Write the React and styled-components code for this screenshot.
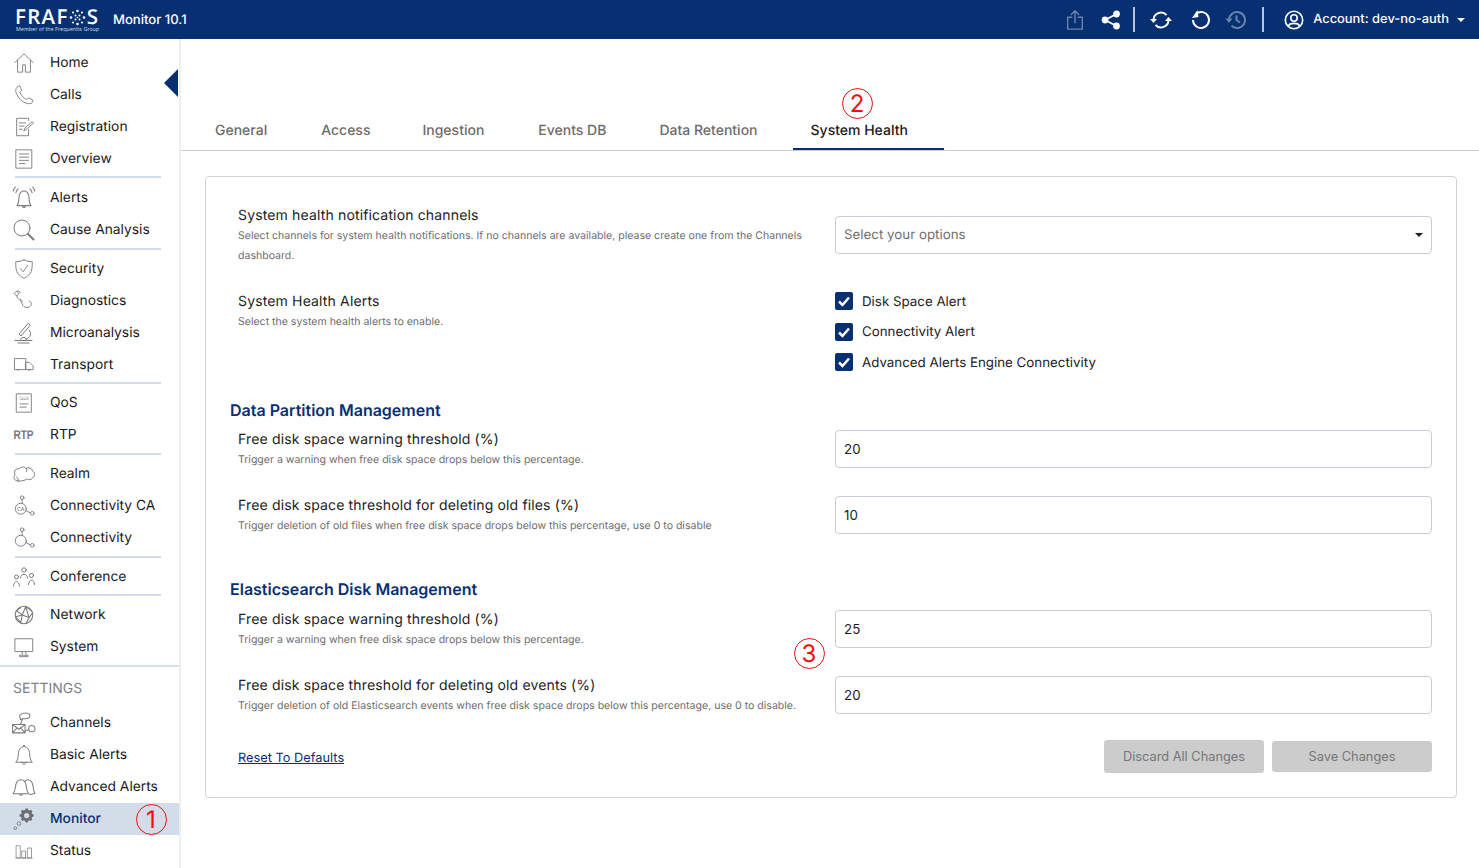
import styled, { createGlobalStyle } from "styled-components";

const NAVY = "#073072";
const ICON = "#7c7c7c";

const GlobalStyle = createGlobalStyle`
  html, body {
    margin: 0;
    padding: 0;
    background: #fff;
    font-family: Inter, "Liberation Sans", sans-serif;
    color: #1b1b1b;
    overflow: hidden;
    text-rendering: geometricPrecision;
  }
  * { box-sizing: border-box; }
`;

const Page = styled.div`
  width: 1479px;
  height: 868px;
  display: flex;
  flex-direction: column;
  position: relative;
  overflow: hidden;
`;

const Header = styled.header`
  height: 39px;
  flex: none;
  background: ${NAVY};
  color: #fff;
  display: flex;
  align-items: center;
  padding-left: 15px;
`;

const Logo = styled.div`
  width: 98px;
  display: flex;
  flex-direction: column;
`;

const LogoWord = styled.div`
  display: flex;
  align-items: center;
  height: 18px;
  font-family: "Open Sans", sans-serif;
  font-size: 20.5px;
  font-weight: 600;
  letter-spacing: 1.3px;
  line-height: 18px;
  margin-top: 3px;
`;

const LogoSub = styled.div`
  font-size: 5.4px;
  line-height: 8px;
  color: #c4d0e2;
  white-space: nowrap;
  padding-left: 1px;
`;

const AppName = styled.div`
  font-size: 13.1px;
  font-weight: 500;
`;

const HeaderRight = styled.div`
  margin-left: auto;
  display: flex;
  align-items: center;
  height: 100%;
`;

const HeaderButton = styled.div`
  display: flex;
  align-items: center;
  justify-content: center;
  width: ${(p) => p.$w || 36}px;
  opacity: ${(p) => (p.$dim ? 0.4 : 1)};
`;

const HeaderDivider = styled.div`
  width: 2px;
  height: 25px;
  background: #b9c4d6;
  margin: 0 ${(p) => p.$r || 12}px 0 ${(p) => p.$l || 12}px;
`;

const Account = styled.div`
  font-size: 12.9px;
  font-weight: 500;
  margin-left: 9px;
`;

const Caret = styled.span`
  width: 0;
  height: 0;
  border-left: 4.5px solid transparent;
  border-right: 4.5px solid transparent;
  border-top: 4.5px solid ${(p) => p.$color || "#fff"};
  margin-left: ${(p) => p.$ml || 0}px;
  margin-right: ${(p) => p.$mr || 0}px;
`;

const Body = styled.div`
  flex: 1;
  display: flex;
  min-height: 0;
`;

const Sidebar = styled.aside`
  width: 181px;
  flex: none;
  padding-top: 7px;
  border-right: 2px solid #eeeeee;
  position: relative;
`;

const Collapse = styled.span`
  display: block;
  position: absolute;
  top: 30px;
  right: 1px;
  width: 0;
  height: 0;
  border-top: 14px solid transparent;
  border-bottom: 14px solid transparent;
  border-right: 14px solid ${NAVY};
`;

const NavGroup = styled.div`
  &:first-of-type {
    padding-bottom: 1px;
  }
`;

const NavItem = styled.div`
  height: 32px;
  padding-top: 1px;
  display: flex;
  align-items: center;
  font-size: 13.8px;
  color: ${(p) => (p.$active ? NAVY : "#1a1a1a")};
  background: ${(p) => (p.$active ? "#d3dce9" : "transparent")};
  font-weight: ${(p) => (p.$active ? 500 : 400)};
`;

const IconSlot = styled.span`
  width: 50px;
  flex: none;
  display: flex;
  justify-content: center;
  padding-right: 3px;
`;

const RtpMark = styled.span`
  font-family: "Liberation Sans", sans-serif;
  font-size: 12.5px;
  font-weight: 700;
  color: #777;
  display: inline-block;
  transform: scaleX(0.8);
`;

const NavDivider = styled.div`
  height: 2px;
  width: 146px;
  margin: 2px 0 2.67px 15px;
  background: #d3dce9;
`;

const SectionRule = styled.div`
  height: 2px;
  margin-top: 2px;
  background: #d8e0ea;
`;

const SettingsTitle = styled.div`
  font-size: 14px;
  color: #808080;
  padding: 12px 0 0 13px;
  height: 40px;
  line-height: 20px;
`;

const Main = styled.main`
  flex: 1;
  min-width: 0;
  display: flex;
  flex-direction: column;
`;

const Tabs = styled.nav`
  height: 112px;
  flex: none;
  display: flex;
  align-items: flex-end;
  padding-left: 16px;
  border-bottom: 1px solid #cfcfcf;
`;

const Tab = styled.div`
  height: 31px;
  padding: 2px ${(p) => (p.$active ? 36 : 18)}px 0 18px;
  margin-right: ${(p) => p.$gap}px;
  font-size: 14px;
  font-weight: 500;
  line-height: 19px;
  color: ${(p) => (p.$active ? "#1b1b1b" : "#6c6c6c")};
  border-bottom: 2px solid ${(p) => (p.$active ? NAVY : "transparent")};
`;

const Card = styled.section`
  margin: 25px 22px 0 24px;
  height: 622px;
  border: 1px solid #cfd2d6;
  border-radius: 4px;
  padding: 28px 24px 0;
`;

const Row = styled.div`
  display: grid;
  grid-template-columns: 570px 597px;
  justify-content: space-between;
  align-items: ${(p) => (p.$top ? "start" : "center")};
  padding-left: 8px;
  margin-bottom: 26px;
`;

const LabelCol = styled.div`
  width: 570px;
`;

const Label = styled.div`
  font-size: 14px;
  letter-spacing: 0.15px;
  line-height: 20px;
  color: #222;
  margin-top: 1px;
`;

const Hint = styled.div`
  font-size: 10.55px;
  line-height: 20px;
  color: #6d6d6d;
  margin-bottom: -1px;
`;

const SectionTitle = styled.h2`
  margin: ${(p) => (p.$spaced ? 42 : 0)}px 0 ${(p) => p.$below}px;
  font-size: 16px;
  line-height: 24px;
  font-weight: 600;
  color: ${NAVY};
`;

const Select = styled.div`
  height: 38px;
  border: 1px solid #c6ccd6;
  border-radius: 4px;
  display: flex;
  align-items: center;
  justify-content: space-between;
  padding: 0 8px;
  font-size: 13.33px;
  color: #6f6f6f;
`;

const Input = styled.input`
  height: 38px;
  width: 100%;
  border: 1px solid #c6ccd6;
  border-radius: 4px;
  padding: 0 8px;
  font: inherit;
  font-size: 13.33px;
  color: #1b1b1b;
  outline: none;
`;

const Checks = styled.div`
  display: flex;
  flex-direction: column;
  gap: 10.5px;
`;

const CheckRow = styled.label`
  display: flex;
  align-items: center;
  height: 20px;
  font-size: 13.33px;
  color: #222;
  gap: 9px;
`;

const CheckText = styled.span`
  padding-top: 1px;
`;

const CheckBox = styled.span`
  width: 18px;
  height: 18px;
  border-radius: 2px;
  background: ${NAVY};
  display: flex;
  align-items: center;
  justify-content: center;
`;

const Footer = styled.div`
  display: flex;
  align-items: center;
  justify-content: space-between;
  padding-left: 8px;
  height: 33px;
  margin-top: -1px;
`;

const ResetLink = styled.a`
  font-size: 12.8px;
  color: ${NAVY};
  text-decoration: underline;
  margin-top: 4px;
`;

const Buttons = styled.div`
  display: flex;
  align-items: center;
  gap: 8px;
`;

const Button = styled.button`
  width: 160px;
  height: ${(p) => p.$h}px;
  border: none;
  border-radius: 3px;
  background: #cccccc;
  color: #767676;
  font: inherit;
  font-size: 12.8px;
`;

const Marker = styled.div`
  position: absolute;
  left: ${(p) => p.$x - 15.5}px;
  top: ${(p) => p.$y - 15.5}px;
  width: 31px;
  height: 31px;
  border: 1.7px solid #f01010;
  border-radius: 50%;
  color: #f01010;
  display: flex;
  align-items: center;
  justify-content: center;
  font-size: 24px;
  font-weight: 400;
`;

const Svg = ({ size = 22, box = 24, stroke = ICON, sw = 1, children }) => (
  <svg width={size} height={size} viewBox={`0 0 ${box} ${box}`} fill="none" stroke={stroke} strokeWidth={sw} strokeLinecap="round" strokeLinejoin="round">
    {children}
  </svg>
);

const navIcons = {
  home: <Svg><path d="M2 11.500 12 2l10 9.500M5 9v13h5.500v-8h3v8H19V9" /></Svg>,
  calls: <Svg><path d="M6 2.500C3 3.500 2 7 4 11c3 6 8 10.500 14 10.500 2.500 0 4-2 3.500-4l-4.500-2.500-2 2c-3-1-6.500-5-7.500-8l2-2L7.500 2.500z" /></Svg>,
  registration: <Svg><path d="M17 5V2.500H4v19h13v-7M7 7.500h7M7 11h5M7 14.500h3" /><path d="M12 16l1-3 8-7 1.500 1.500-8 7z" /></Svg>,
  overview: <Svg><path d="M3.500 2h17v20h-17zM7 6.500h10M7 10h10M7 13.500h10M7 17h6" /></Svg>,
  alerts: <Svg size={26}><path d="M5.500 19c2-2 1.500-5.500 2-8.500.5-3 2.500-5 4.500-5s4 2 4.500 5c.5 3 0 6.500 2 8.500zM10.500 19c0 2.500 3 2.500 3 0M4.500 7c.3-1.500 1-2.500 2-3.500M19.500 7c-.3-1.500-1-2.500-2-3.500M2 5.500c.5-1.500 1-2.500 2-3.500M22 5.500c-.5-1.500-1-2.500-2-3.500" /></Svg>,
  cause: <Svg size={24}><circle cx="10" cy="10" r="8" /><path d="M16 16l5.500 5.500" strokeWidth="2" /></Svg>,
  security: <Svg><path d="M12 2c3 1.500 5.500 2 9 2 0 8 0 14-9 18C3 18 3 12 3 4c3.500 0 6-.5 9-2z" /><path d="M8 11.500l3 3.500 5-7" /></Svg>,
  diagnostics: <Svg><path d="M4 1.500 6.500 4 4 6.500 1.500 4zM4 6.500c0 3.500 4.500 4 5.500 7 .8 2.500 1.500 5 4.500 5.500 3 .4 6-1 6-4 0-1.500-1-2.500-2.500-3M4 1.500c2-1 4 0 4 1.500M9.500 13.500c1-1.500 0-3-1.500-3.500" /></Svg>,
  micro: <Svg size={24}><path d="M16 2.500 7 13l2 2 9-10.500zM17 9c3 3 2 8-3 9M3 19.500h17M8 19.500l2-3h3l2 3M6 22h11" /></Svg>,
  transport: <Svg><path d="M2 5h12v12H2zM14 9h4l4 4v4h-8zM7 17a2 2 0 0 1-3 0M19 17a2 2 0 0 1-3 0" /></Svg>,
  qos: (
    <Svg>
      <path d="M4 2h16v20H4zM7.500 13h9M7.500 16.500h7" />
      <text x="12" y="9" fontSize="5" textAnchor="middle" fill={ICON} stroke="none">QoS</text>
    </Svg>
  ),
  rtp: <RtpMark>RTP</RtpMark>,
  realm: <Svg size={24}><path d="M6 19c-4 0-5-4-3-6.500C1.500 9 4 6 7 7c2-2.500 5.500-2.500 7-.5 2.500-1.500 6-.5 6.500 2.500 2.500 1 3 5.500 0 7-2 2.500-5 1.500-6 1-2 2-5 2-8 2zM6 19c.5-2 0-3-1.500-4M14 6.500c1 1 1 2 .5 3" /></Svg>,
  connca: <Svg><circle cx="10" cy="3" r="2" /><circle cx="8.500" cy="15" r="6" /><circle cx="21" cy="20" r="2" /><path d="M10 5v4M14 17l5 2.500" /><text x="8.500" y="17" fontSize="6" textAnchor="middle" fill={ICON} stroke="none">CA</text></Svg>,
  conn: <Svg><circle cx="10" cy="3" r="2" /><circle cx="8.500" cy="15" r="6" /><circle cx="21" cy="20" r="2" /><path d="M10 5v4M14 17l5 2.500" /></Svg>,
  conference: (
    <Svg size={24}>
      <circle cx="12" cy="5" r="2.200" /><path d="M8.500 13c0-5 7-5 7 0" />
      <circle cx="4.500" cy="12" r="2" /><path d="M1.500 21c.5-6 5.500-6 6 0" />
      <circle cx="19.500" cy="10.500" r="2" /><path d="M16.500 19.500c.5-6 6-6 6 0" />
    </Svg>
  ),
  network: <Svg size={20} sw={1.300}><circle cx="12" cy="12" r="10.500" /><path d="M3 7l7 5-8 2M10 12l4-10M10 12l-2 9.500M10 12l8 3-3 6M18 15l4-5M14 2l7 5M3 7l5-4M14 2l4 13M2 14l6 7" /></Svg>,
  system: <Svg><path d="M2.500 3h19v14h-19zM10 17v3M14 17v3M7.500 21h9v1.500h-9z" /></Svg>,
  channels: (
    <Svg size={25}>
      <path d="M1.500 13h12v8h-12zM1.500 13l6 4.500 6-4.500M1.500 21l4.500-5M13.500 21 9 16" />
      <path d="M9 3.500c2-2 8-2 9 0 1 2-1 4-4.500 4-.7 0-1.500 0-2.300-.2L9 8.500V6.500C8 6 8 4.500 9 3.500zM9 13l2-5" />
      <circle cx="20" cy="17" r="3" /><path d="M17 18l-3 1" />
    </Svg>
  ),
  basic: <Svg size={24}><path d="M4 19c2.500-2.500 2-6 2.500-9.500C7 6 9.500 3.500 12 3.500S17 6 17.500 9.500C18 13 17.500 16.500 20 19zM10 19c0 3 4 3 4 0M11.500 3.500V2.500h1v1" /></Svg>,
  advanced: <Svg size={25}><path d="M2 18c2-2.500 2-5 2.500-8C5 7 7 4.500 9.500 4.500 12 4.500 14 7 14.500 10c.5 3 .5 5.500 2.500 8zM8 18c0 2 3 2 3 0M13 6.500c.7-1 2-2 3-2 2.500 0 4.500 2.500 5 5.500.4 3 .4 5 2 7.500l-5 1.500" /></Svg>,
  monitor: (
    <svg width="22" height="22" viewBox="0 0 24 24" fill="#6e6e6e" stroke="none">
      <path fillRule="evenodd" d="M13 3h3l.5 2 1.800.8 1.800-1 2 2-1 1.800.8 1.900 2 .5v2.800l-2 .5-.8 1.800 1 1.800-2 2-1.800-1-1.800.8-.5 2h-3l-.5-2-1.800-.8-1.800 1-2-2 1-1.800-.8-1.800-2-.5v-2.800l2-.5.800-1.900-1-1.800 2-2 1.800 1 1.800-.8zm1.500 6a3.500 3.500 0 1 0 0 7 3.500 3.500 0 0 0 0-7z" transform="translate(3 -2) scale(.82)" />
      <circle cx="6.500" cy="17" r="2" fill="none" stroke="#7c7c7c" />
      <circle cx="2.500" cy="22" r="1.500" fill="none" stroke="#7c7c7c" />
    </svg>
  ),
  status: <Svg size={18}><path d="M2 5h5v16H2zM9.500 12H14v9H9.500zM17 8h5v13h-5zM1 21.500h22" /></Svg>,
};

const monitorNav = [
  [["home", "Home"], ["calls", "Calls"], ["registration", "Registration"], ["overview", "Overview"]],
  [["alerts", "Alerts"], ["cause", "Cause Analysis"]],
  [["security", "Security"], ["diagnostics", "Diagnostics"], ["micro", "Microanalysis"], ["transport", "Transport"]],
  [["qos", "QoS"], ["rtp", "RTP"]],
  [["realm", "Realm"], ["connca", "Connectivity CA"], ["conn", "Connectivity"]],
  [["conference", "Conference"]],
  [["network", "Network"], ["system", "System"]],
];

const settingsNav = [
  ["channels", "Channels"],
  ["basic", "Basic Alerts"],
  ["advanced", "Advanced Alerts"],
  ["monitor", "Monitor"],
  ["status", "Status"],
];

const tabs = [
  ["General", 18],
  ["Access", 16],
  ["Ingestion", 18],
  ["Events DB", 17],
  ["Data Retention", 17],
  ["System Health", 0],
];

const LogoMark = () => (
  <svg width="17" height="17" viewBox="0 0 17 17" fill="#fff" style={{ margin: "0 1px 0 0" }}>
    {[[8.500, 2, 1.300], [4, 3.500, 1.100], [13, 3.500, 1.100], [2, 8.500, 1.300], [15, 8.500, 1.300], [4, 13.500, 1.100], [13, 13.500, 1.100], [8.500, 15, 1.300], [6.500, 6.500, 1], [10.500, 6.500, 1], [6.500, 10.500, 1], [10.500, 10.500, 1], [8.500, 8.500, 0.800]].map(([cx, cy, r]) => (
      <circle key={`${cx}-${cy}`} cx={cx} cy={cy} r={r} />
    ))}
  </svg>
);

const HeaderIcons = () => (
  <HeaderRight>
    <HeaderButton $dim>
      <Svg size={22} stroke="#fff" sw={1.500}><path d="M12 15V2M8 6l4-4 4 4M8.500 9H4v13h16V9h-4.500" /></Svg>
    </HeaderButton>
    <HeaderButton>
      <svg width="20" height="20" viewBox="0 0 20 20" fill="#fff" stroke="#fff" strokeWidth="1.800">
        <circle cx="15.500" cy="4" r="2.500" /><circle cx="15.500" cy="16" r="2.500" /><circle cx="4" cy="10" r="2.500" />
        <path d="M15.500 4 4 10l11.500 6" fill="none" />
      </svg>
    </HeaderButton>
    <HeaderDivider $l={4} $r={13} />
    <HeaderButton $w={26}>
      <svg width="24" height="22" viewBox="0 0 24 22" fill="none" stroke="#fff" strokeWidth="2">
        <path d="M4.500 11a7.500 7.500 0 0 1 13-5M19.500 11a7.500 7.500 0 0 1-13 5" />
        <path d="M1 10h7l-3.500 4zM23 12h-7l3.500-4z" fill="#fff" stroke="none" />
      </svg>
    </HeaderButton>
    <HeaderButton $w={51}>
      <svg width="22" height="22" viewBox="0 0 22 22" fill="none" stroke="#fff" strokeWidth="2">
        <path d="M4 11a8 8 0 1 0 3-6.300" />
        <path d="M9 1.500v7H2.500z" fill="#fff" stroke="none" transform="rotate(-8 6 5)" />
      </svg>
    </HeaderButton>
    <HeaderButton $w={22} $dim>
      <svg width="22" height="22" viewBox="0 0 22 22" fill="none" stroke="#fff" strokeWidth="2">
        <path d="M4 11a8 8 0 1 1 2.500 5.800M11.500 6.500V11l3.500 2.500" />
        <path d="M0.500 9.500h7L4 14z" fill="#fff" stroke="none" />
      </svg>
    </HeaderButton>
    <HeaderDivider $l={15} $r={20} />
    <svg width="20" height="20" viewBox="0 0 20 20" fill="none" stroke="#fff" strokeWidth="1.600">
      <circle cx="10" cy="10" r="8.700" /><circle cx="10" cy="8" r="3.200" /><path d="M4.500 16c1-3.500 10-3.500 11 0" />
    </svg>
    <Account>Account: dev-no-auth</Account>
    <Caret $ml={8} $mr={14} />
  </HeaderRight>
);

const Field = ({ label, hint, value }) => (
  <Row>
    <LabelCol>
      <Label>{label}</Label>
      <Hint>{hint}</Hint>
    </LabelCol>
    <Input defaultValue={value} />
  </Row>
);

const Check = ({ children }) => (
  <CheckRow>
    <CheckBox>
      <svg width="14" height="14" viewBox="0 0 14 14" fill="none" stroke="#fff" strokeWidth="2.500"><path d="M2 7.500 5.500 11 12 3.500" /></svg>
    </CheckBox>
    <CheckText>{children}</CheckText>
  </CheckRow>
);

const Item = ({ icon, label, active }) => (
  <NavItem $active={active}>
    <IconSlot>{navIcons[icon]}</IconSlot>
    {label}
  </NavItem>
);

const App = () => (
  <Page>
    <GlobalStyle />
    <Header>
      <Logo>
        <LogoWord>FRAF<LogoMark />S</LogoWord>
        <LogoSub>Member of the Frequentis Group</LogoSub>
      </Logo>
      <AppName>Monitor 10.1</AppName>
      <HeaderIcons />
    </Header>
    <Body>
      <Sidebar>
        <Collapse />
        {monitorNav.map((group, i) => (
          <NavGroup key={group[0][0]}>
            {group.map(([icon, label]) => <Item key={icon} icon={icon} label={label} />)}
            {i < monitorNav.length - 1 && <NavDivider />}
          </NavGroup>
        ))}
        <SectionRule />
        <SettingsTitle>SETTINGS</SettingsTitle>
        {settingsNav.map(([icon, label]) => (
          <Item key={icon} icon={icon} label={label} active={icon === "monitor"} />
        ))}
      </Sidebar>
      <Main>
        <Tabs>
          {tabs.map(([name, gap]) => (
            <Tab key={name} $gap={gap} $active={name === "System Health"}>{name}</Tab>
          ))}
        </Tabs>
        <Card>
          <Row>
            <LabelCol>
              <Label>System health notification channels</Label>
              <Hint>Select channels for system health notifications. If no channels are available, please create one from the Channels dashboard.</Hint>
            </LabelCol>
            <Select>
              Select your options
              <Caret $color="#222" $mr={0} />
            </Select>
          </Row>
          <Row $top>
            <LabelCol>
              <Label>System Health Alerts</Label>
              <Hint>Select the system health alerts to enable.</Hint>
            </LabelCol>
            <Checks>
              <Check>Disk Space Alert</Check>
              <Check>Connectivity Alert</Check>
              <Check>Advanced Alerts Engine Connectivity</Check>
            </Checks>
          </Row>
          <SectionTitle $below={7}>Data Partition Management</SectionTitle>
          <Field label="Free disk space warning threshold (%)" hint="Trigger a warning when free disk space drops below this percentage." value="20" />
          <Field label="Free disk space threshold for deleting old files (%)" hint="Trigger deletion of old files when free disk space drops below this percentage, use 0 to disable" value="10" />
          <SectionTitle $spaced $below={8}>Elasticsearch Disk Management</SectionTitle>
          <Field label="Free disk space warning threshold (%)" hint="Trigger a warning when free disk space drops below this percentage." value="25" />
          <Field label="Free disk space threshold for deleting old events (%)" hint="Trigger deletion of old Elasticsearch events when free disk space drops below this percentage, use 0 to disable." value="20" />
          <Footer>
            <ResetLink href="#">Reset To Defaults</ResetLink>
            <Buttons>
              <Button $h={33}>Discard All Changes</Button>
              <Button $h={31}>Save Changes</Button>
            </Buttons>
          </Footer>
        </Card>
      </Main>
    </Body>
    <Marker $x={151} $y={819}>1</Marker>
    <Marker $x={857} $y={103}>2</Marker>
    <Marker $x={809} $y={653}>3</Marker>
  </Page>
);

export default App;
